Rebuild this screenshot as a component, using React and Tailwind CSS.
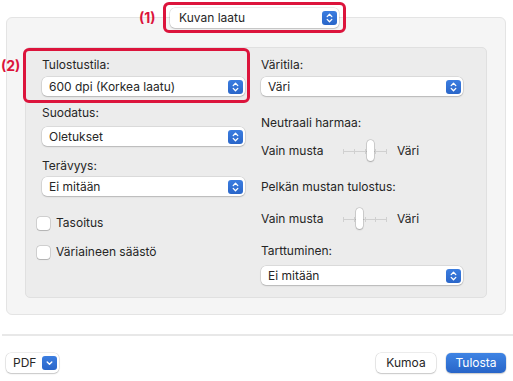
import React from "react";

function Stepper() {
  return (
    <span className="flex h-[14px] w-[15px] items-center justify-center rounded-[3px] bg-linear-to-b from-[#3b7de0] to-[#2a66c9]">
      <svg width="9" height="12" viewBox="0 0 9 12" fill="none" stroke="white" strokeWidth="1.3" strokeLinecap="round" strokeLinejoin="round">
        <path d="M2.2 4.6 L4.5 2.3 L6.8 4.6" />
        <path d="M2.2 7.4 L4.5 9.7 L6.8 7.4" />
      </svg>
    </span>
  );
}

function Select({ value, className }) {
  return (
    <div
      className={
        "flex h-[19px] items-center justify-between rounded-[5px] bg-white pl-[7px] pr-[2px] text-[12px] text-[#262626] shadow-[0_0_0_0.5px_rgba(0,0,0,0.14),0_1px_1.5px_rgba(0,0,0,0.16)] " +
        className
      }
    >
      <span>{value}</span>
      <Stepper />
    </div>
  );
}

function Label({ children, className }) {
  return <div className={"h-[16px] text-[12px] leading-[16px] text-[#262626] " + className}>{children}</div>;
}

function Checkbox({ label, className }) {
  return (
    <div className={"ml-[-5px] flex h-[16px] items-center gap-[6px] text-[12px] text-[#262626] " + className}>
      <span className="h-[13px] w-[13px] rounded-[3px] bg-white shadow-[0_0_0_0.5px_rgba(0,0,0,0.22),0_0.5px_1px_rgba(0,0,0,0.15)]" />
      <span>{label}</span>
    </div>
  );
}

function Slider({ knobClass }) {
  return (
    <div className="relative h-[22px] w-[44px]">
      <div className="flex h-full items-center justify-between">
        <span className="h-[5px] w-px bg-[#d0d0d0]" />
        <span className="h-[5px] w-px bg-[#d0d0d0]" />
        <span className="h-[5px] w-px bg-[#d0d0d0]" />
        <span className="h-[5px] w-px bg-[#d0d0d0]" />
        <span className="h-[5px] w-px bg-[#d0d0d0]" />
      </div>
      <div className="absolute left-0 right-0 top-[10.5px] h-px bg-[#d0d0d0]" />
      <div
        className={
          "absolute top-0 h-[21px] w-[7px] rounded-full bg-white shadow-[0_0_0_0.5px_rgba(0,0,0,0.22),0_1px_1.5px_rgba(0,0,0,0.2)] " +
          knobClass
        }
      />
    </div>
  );
}

function SliderRow({ knobClass, className }) {
  return (
    <div className={"flex h-[22px] items-center text-[12px] text-[#262626] " + className}>
      <span className="w-[82px]">Vain musta</span>
      <Slider knobClass={knobClass} />
      <span className="ml-[10px]">Väri</span>
    </div>
  );
}

export default function App() {
  return (
    <div className="relative h-[381px] w-[513px] overflow-hidden bg-white pt-[2px] font-[family-name:Inter,sans-serif]">
      {/* top popup row */}
      <div className="relative z-10 flex h-[31px] items-center">
        <span className="ml-[139px] w-[24px] text-[14px] font-bold text-[#dc143c]">(1)</span>
        <div className="flex h-[31px] w-[183px] items-center rounded-[6px] border-[3px] border-[#dc143c] bg-transparent pl-[4px]">
          <div className="flex h-[20px] w-[169px] items-center justify-between rounded-[5px] bg-white pl-[9px] pr-[2px] text-[12px] text-[#262626] shadow-[0_0_0_0.5px_rgba(0,0,0,0.14),0_1px_1.5px_rgba(0,0,0,0.16)]">
            <span>Kuvan laatu</span>
            <Stepper />
          </div>
        </div>
      </div>

      {/* outer panel */}
      <div className="mx-[6px] mt-[-16px] h-[298px] w-[500px] rounded-[6px] border border-[#e4e4e4] bg-[#f5f5f5] px-[18px] pt-[29px]">
        <div className="flex h-[251px] gap-[16px] rounded-[5px] border border-[#e0e0e0] bg-[#ececec] pl-[16px] pr-[23px]">
          {/* left column */}
          <div className="flex w-[203px] flex-col">
            <Label className="mt-[9px]">Tulostustila:</Label>
            <Select value="600 dpi (Korkea laatu)" className="mt-[4px]" />
            <Label className="mt-[9px]">Suodatus:</Label>
            <Select value="Oletukset" className="mt-[6px]" />
            <Label className="mt-[12px]">Terävyys:</Label>
            <Select value="Ei mitään" className="mt-[3px]" />
            <Checkbox label="Tasoitus" className="mt-[19px]" />
            <Checkbox label="Väriaineen säästö" className="mt-[13px]" />
          </div>
          {/* right column */}
          <div className="flex w-[202px] flex-col">
            <Label className="mt-[9px]">Väritila:</Label>
            <Select value="Väri" className="mt-[4px]" />
            <Label className="mt-[19px]">Neutraali harmaa:</Label>
            <SliderRow knobClass="left-[24px]" className="mt-[9px]" />
            <Label className="mt-[17px]">Pelkän mustan tulostus:</Label>
            <SliderRow knobClass="left-[13px]" className="mt-[13px]" />
            <Label className="mt-[13px]">Tarttuminen:</Label>
            <Select value="Ei mitään" className="mt-[7px]" />
          </div>
        </div>
      </div>

      {/* divider */}
      <div className="ml-[2px] mt-[19px] h-[2px] bg-[#e8e8e8]" />

      {/* bottom buttons */}
      <div className="mt-[17px] flex items-center justify-between pl-[6px] pr-[7px]">
        <div className="flex h-[20px] w-[53px] items-center justify-between rounded-[5px] bg-white pl-[7px] pr-[2px] text-[12px] text-[#262626] shadow-[0_0_0_0.5px_rgba(0,0,0,0.14),0_1px_1.5px_rgba(0,0,0,0.16)]">
          <span>PDF</span>
          <span className="flex h-[14px] w-[15px] items-center justify-center rounded-[3px] bg-linear-to-b from-[#3b7de0] to-[#2a66c9]">
            <svg width="9" height="8" viewBox="0 0 9 8" fill="none" stroke="white" strokeWidth="1.4" strokeLinecap="round" strokeLinejoin="round">
              <path d="M2.2 3 L4.5 5.3 L6.8 3" />
            </svg>
          </span>
        </div>
        <div className="flex items-center gap-[10px]">
          <div className="flex h-[20px] w-[60px] items-center justify-center rounded-[5px] bg-white text-[12px] text-[#262626] shadow-[0_0_0_0.5px_rgba(0,0,0,0.14),0_1px_1.5px_rgba(0,0,0,0.16)]">
            Kumoa
          </div>
          <div className="flex h-[20px] w-[60px] items-center justify-center rounded-[5px] bg-linear-to-b from-[#3f84e4] to-[#2865c8] text-[12px] text-white shadow-[0_0_0_0.5px_rgba(0,0,0,0.12),0_1px_1.5px_rgba(0,0,0,0.16)]">
            Tulosta
          </div>
        </div>
      </div>

      {/* annotation (2) overlay */}
      <span className="pointer-events-none absolute left-[1px] top-[55px] text-[14px] font-bold text-[#dc143c]">(2)</span>
      <div className="pointer-events-none absolute left-[23px] top-[48px] h-[55px] w-[227px] rounded-[6px] border-[3px] border-[#dc143c]" />
    </div>
  );
}
